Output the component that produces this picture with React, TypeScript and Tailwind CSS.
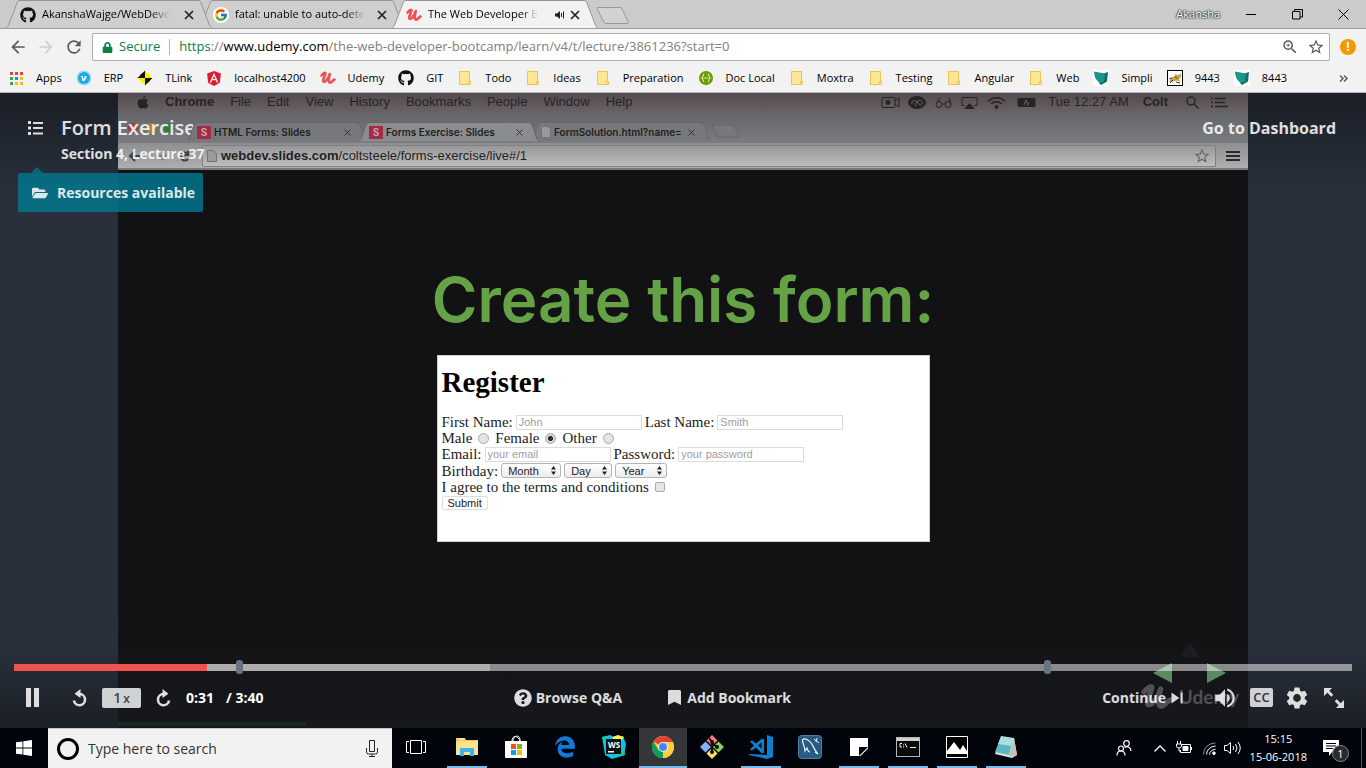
import React from "react";
import type { ReactNode } from "react";
import { FaGithub, FaAngular, FaFolderOpen, FaQuestionCircle, FaEdgeLegacy, FaLock, FaBookmark } from "react-icons/fa";
import { FcGoogle } from "react-icons/fc";
import {
  MdArrowBack,
  MdArrowForward,
  MdRefresh,
  MdOutlineZoomIn,
  MdStarBorder,
  MdSettings,
  MdVolumeUp,
  MdSkipNext,
} from "react-icons/md";

/* ---------- Logos ---------- */

function UdemyMark({ className }: { className?: string }) {
  return (
    <svg viewBox="0 0 16 14" className={className} fill="none" stroke="currentColor" strokeLinecap="round" strokeLinejoin="round">
      <path d="M1.500 4.500C3 2.800 4.800 1.200 5.400 2C6 3 3 7.500 3.200 9.800C3.500 12.500 7.500 10 9.800 3C8.500 8 8.300 11.600 10.200 11.600C12 11.600 12.500 9.500 14.500 8.500" strokeWidth="2.600" />
    </svg>
  );
}

function AppsGrid() {
  const fills = ["#ea4335", "#ea4335", "#ea4335", "#34a853", "#1a8cff", "#fbbc05", "#34a853", "#fbbc05", "#fbbc05"];
  return (
    <svg viewBox="0 0 13 13" className="size-[13px]" shapeRendering="crispEdges">
      {fills.map((f, i) => (
        <rect key={i} x={(i % 3) * 5} y={Math.floor(i / 3) * 5} width="3" height="3" fill={f} />
      ))}
    </svg>
  );
}

function FolderIcon() {
  return (
    <svg viewBox="0 0 12 14" className="h-[14px] w-3">
      <path d="M.5.500h10v10h1v3H.500z" fill="#ffe694" stroke="#eac54f" />
      <path d="M9.500 13.500v-3h2" fill="none" stroke="#eac54f" />
    </svg>
  );
}

function VBadge() {
  return (
    <svg viewBox="0 0 16 16" className="size-4">
      <circle cx="8" cy="8" r="7.500" fill="#9fdcf5" />
      <circle cx="8" cy="8" r="6" fill="#1cabe2" />
      <path d="M4.800 6.400c1.200-.9 1.700-1.200 2.100.2l.6 2.600c1-1 1.200-1.900.7-2.200.6-1.400 2.600-1.500 2.300.2-.3 1.600-2.200 4.100-3.200 4.100s-1.100-1.700-1.600-4z" fill="#fff" />
    </svg>
  );
}

function TargetIcon() {
  return (
    <svg viewBox="0 0 16 16" className="size-4">
      <path d="M8 .5v7.500H.5L2.800 5.800a6 6 0 0 1 3-3z" fill="#111" />
      <path d="M8 .5l2.200 2.300a6 6 0 0 1 3 3L15.500 8H8z" fill="#ffee00" />
      <path d="M15.500 8l-2.300 2.200a6 6 0 0 1-3 3L8 15.500V8z" fill="#111" />
      <path d="M8 15.500l-2.200-2.300a6 6 0 0 1-3-3L.5 8H8z" fill="#ffee00" />
    </svg>
  );
}

function GreenBraces() {
  return (
    <svg viewBox="0 0 16 16" className="size-[14px]">
      <circle cx="8" cy="8" r="8" fill="#6a9a06" />
      <path d="M6 3.500C4 3.500 5.200 7.500 3.500 8C5.200 8.500 4 12.500 6 12.500M10 3.500c2 0 .8 4 2.500 4.500c-1.700.5-.5 4.500-2.500 4.500M5.500 8h5" fill="none" stroke="#d9f0a8" strokeWidth="1.300" />
    </svg>
  );
}

function TealLeaf() {
  return (
    <svg viewBox="0 0 16 16" className="size-4">
      <rect width="16" height="16" fill="#fff" />
      <path d="M9 4L15 2L14 11.500L8 15L6 13z" fill="#0f6f66" />
      <path d="M1 1.500L12 3.500L11 11.500L6.500 13C3 10.500 1 6.500 1 1.500z" fill="#1a978a" />
    </svg>
  );
}

function TomcatIcon() {
  return (
    <svg viewBox="0 0 16 16" className="size-4">
      <rect x=".5" y=".5" width="15" height="15" fill="#fff" stroke="#000" />
      <path d="M2.500 11C4 7 6 7 8 6l.5-2.500 1.500 1.500h2L14 3v4l-2 2 1.500 3-3-1.500-4 .5-3 1.500z" fill="#c9a04c" />
      <path d="M3 13l3-3M9 12l4 1M2.500 8.500L5 8M8 6.500l2 2" stroke="#3b2a10" fill="none" />
    </svg>
  );
}

/* ---------- Browser frame ---------- */

function TabEdge({ side, active }: { side: "left" | "right"; active?: boolean }) {
  const fill = active ? "#f2f2f2" : "#cfcfcf";
  return (
    <svg viewBox="0 0 14 28" className="h-7 w-[14px] shrink-0" aria-hidden="true">
      {side === "left" ? (
        <>
          <path d="M0 28C2 27 2 26 3 24L11 3C11.500 1.500 12 .5 14 .5V28z" fill={fill} />
          <path d="M0 28C2 27 2 26 3 24L11 3C11.500 1.500 12 .5 14 .5" fill="none" stroke="#959595" />
        </>
      ) : (
        <>
          <path d="M14 28C12 27 12 26 11 24L3 3C2.500 1.500 2 .5 0 .5V28z" fill={fill} />
          <path d="M14 28C12 27 12 26 11 24L3 3C2.500 1.500 2 .5 0 .5" fill="none" stroke="#959595" />
        </>
      )}
    </svg>
  );
}

function CloseX() {
  return (
    <svg viewBox="0 0 10 10" className="size-[10px]" stroke="#222" strokeWidth="1.700" fill="none">
      <path d="M1 1l8 8M9 1L1 9" />
    </svg>
  );
}

function Tab({ icon, title, active, audible, layer }: { icon: ReactNode; title: string; active?: boolean; audible?: boolean; layer: string }) {
  return (
    <div className={`relative -mr-[13px] flex h-7 ${layer}`}>
      <TabEdge side="left" active={active} />
      <div className={`flex w-[178px] items-center justify-between border-t border-[#959595] pr-1 ${active ? "bg-[#f2f2f2]" : "bg-[#cfcfcf]"}`}>
        <button className="flex items-center gap-[6px] text-left">
          <span className="flex size-4 shrink-0 items-center justify-center">{icon}</span>
          <span className="whitespace-nowrap mask-r-from-85% mask-r-to-100%">{title}</span>
        </button>
        <span className="flex items-center gap-[5px]">
          {audible && (
            <svg viewBox="0 0 10 10" className="size-[10px] shrink-0" aria-label="Playing audio">
              <path d="M0 3.500h2L5 1v8L2 6.500H0z" fill="#222" />
              <path d="M6.500 3v4M8.500 1.500v7" stroke="#222" strokeWidth="1" fill="none" />
            </svg>
          )}
          <button aria-label="Close tab">
            <CloseX />
          </button>
        </span>
      </div>
      <TabEdge side="right" active={active} />
    </div>
  );
}

function TabStrip() {
  return (
    <div className="flex h-[29px] items-start justify-between border-b border-[#a0a0a0] bg-[#cbcbcb] text-[11px] text-black">
      <div className="flex pl-[6px]">
        <Tab layer="z-[2]" icon={<FaGithub className="size-4 text-[#111]" />} title="AkanshaWajge/WebDeve" />
        <Tab
          layer="z-[1]"
          icon={
            <span className="flex size-4 items-center justify-center rounded-full bg-white">
              <FcGoogle className="size-[14px]" />
            </span>
          }
          title="fatal: unable to auto-dete"
        />
        <Tab layer="z-[3]" active audible icon={<UdemyMark className="size-4 text-[#ec5252]" />} title="The Web Developer B" />
        <button aria-label="New tab" className="mt-[7px] ml-[10px] self-start">
          <svg viewBox="0 0 36 18" className="h-[18px] w-9">
            <path d="M2.500.500h22.500q1.500 0 2.200 1.500l6 13q.6 1.500-1 1.500H11q-1.600 0-2.300-1.500l-6.500-13Q1.500.5 3 .5z" fill="#d2d2d2" stroke="#989898" />
          </svg>
        </button>
      </div>
      <div className="flex h-7 items-center">
        <span className="mr-2 text-[11px] text-white [text-shadow:0_0_2px_#000,0_0_2px_#000]">Akansha</span>
        <button aria-label="Minimize" className="flex w-[46px] justify-center">
          <svg viewBox="0 0 11 11" className="size-[11px]" stroke="#000" fill="none">
            <path d="M0 5.500h10" />
          </svg>
        </button>
        <button aria-label="Restore" className="flex w-[46px] justify-center">
          <svg viewBox="0 0 11 11" className="size-[11px]" stroke="#000" fill="none">
            <path d="M.5 2.500h7.500v7.500H.5zM2.500 2.500V.5h8v7.500H8" />
          </svg>
        </button>
        <button aria-label="Close" className="flex w-[46px] justify-center">
          <svg viewBox="0 0 11 11" className="size-[11px]" stroke="#000" fill="none">
            <path d="M.5.5l10 10M10.500.5l-10 10" />
          </svg>
        </button>
      </div>
    </div>
  );
}

function Toolbar() {
  return (
    <div className="flex items-center bg-[#f2f2f2] pt-1 pb-[3px] text-[#5a5a5a]">
      <button aria-label="Back" className="ml-2">
        <MdArrowBack className="size-5" />
      </button>
      <button aria-label="Forward" className="ml-2 text-[#d0d0d0]">
        <MdArrowForward className="size-5" />
      </button>
      <button aria-label="Reload" className="mr-2 ml-2">
        <MdRefresh className="size-5" />
      </button>
      <div className="flex h-7 flex-1 items-center rounded-xs border border-[#adadad] bg-white px-1 pl-2 text-[13px]">
        <FaLock className="mx-px size-[11px] text-[#0b8043]" />
        <span className="ml-[5px] text-[#0b8043]">Secure</span>
        <span className="mx-[9px] h-4 w-px bg-[#b5b5b5]" />
        <div role="textbox" aria-label="Address" contentEditable suppressContentEditableWarning className="flex-1 whitespace-nowrap text-[#808080] outline-none">
          <span className="text-[#0b8043]">https</span>://<span className="text-black">www.udemy.com</span>
          /the-web-developer-bootcamp/learn/v4/t/lecture/3861236?start=0
        </div>
        <button aria-label="Zoom">
          <MdOutlineZoomIn className="size-[18px]" />
        </button>
        <button aria-label="Bookmark this page" className="ml-2">
          <MdStarBorder className="size-[18px]" />
        </button>
      </div>
      <button aria-label="Update" className="mr-[10px] ml-[10px] flex size-4 items-center justify-center rounded-full bg-[#f29900] text-[12px] font-bold text-white">
        !
      </button>
    </div>
  );
}

const bookmarks: { label: string; icon: ReactNode }[] = [
  { label: "Apps", icon: <AppsGrid /> },
  { label: "ERP", icon: <VBadge /> },
  { label: "TLink", icon: <TargetIcon /> },
  { label: "localhost4200", icon: <FaAngular className="size-[17px] text-[#dd1b2f]" /> },
  { label: "Udemy", icon: <UdemyMark className="size-4 text-[#ec5252]" /> },
  { label: "GIT", icon: <FaGithub className="size-4 text-[#111]" /> },
  { label: "Todo", icon: <FolderIcon /> },
  { label: "Ideas", icon: <FolderIcon /> },
  { label: "Preparation", icon: <FolderIcon /> },
  { label: "Doc Local", icon: <GreenBraces /> },
  { label: "Moxtra", icon: <FolderIcon /> },
  { label: "Testing", icon: <FolderIcon /> },
  { label: "Angular", icon: <FolderIcon /> },
  { label: "Web", icon: <FolderIcon /> },
  { label: "Simpli", icon: <TealLeaf /> },
  { label: "9443", icon: <TomcatIcon /> },
  { label: "8443", icon: <TealLeaf /> },
];

function BookmarksBar() {
  return (
    <nav aria-label="Bookmarks" className="flex h-[29px] items-center justify-between border-b border-[#b6b4b6] bg-[#f2f2f2] pr-[18px] pl-2 text-[11px] text-black">
      <div className="flex items-center gap-[14px]">
        {bookmarks.map((b) => (
          <a key={b.label} href="#" className="flex items-center gap-3 whitespace-nowrap">
            <span className="flex size-4 items-center justify-center">{b.icon}</span>
            {b.label}
          </a>
        ))}
      </div>
      <button aria-label="More bookmarks">
        <svg viewBox="0 0 9 7" className="h-[7px] w-[9px]" fill="none" stroke="#555" strokeWidth="1.400">
          <path d="M1 .5l3 3-3 3M5 .5l3 3-3 3" />
        </svg>
      </button>
    </nav>
  );
}

/* ---------- Recorded screen inside the video ---------- */

function VideoMenuBar() {
  return (
    <div className="flex h-[18px] items-center justify-between bg-linear-to-b from-[#514a4e] to-[#6a6063] pr-5 pl-[19px] font-['Liberation_Sans'] text-[13px] text-[#262325]">
      <div className="flex items-center gap-4">
        <svg viewBox="0 0 12 13" className="h-[13px] w-3" fill="currentColor">
          <path d="M8.300 0c.1 1.300-1.100 2.600-2.400 2.600C5.700 1.400 7 .1 8.300 0zM6 3.400c.6 0 1.400-.7 2.500-.7 1 0 1.900.5 2.400 1.300-2.100 1.300-1.700 4.100.5 5-.5 1.500-1.700 3.500-2.900 3.500-.9 0-1.200-.5-2.300-.5s-1.500.5-2.300.5C2.500 12.500.700 9.600.700 6.900c0-2.500 1.500-4 3.100-4C4.800 2.900 5.500 3.400 6 3.400z" />
        </svg>
        <span className="font-bold">Chrome</span>
        <span>File</span>
        <span>Edit</span>
        <span>View</span>
        <span>History</span>
        <span>Bookmarks</span>
        <span>People</span>
        <span>Window</span>
        <span>Help</span>
      </div>
      <div className="flex items-center">
        <svg viewBox="0 0 157 13" className="mr-[10px] h-[13px] w-[157px]" fill="none" stroke="currentColor">
          <rect x="1" y="1.500" width="13" height="10" rx="1" />
          <circle cx="7" cy="6.500" r="2" fill="currentColor" />
          <path d="M14 5l4-3v9l-4-3" />
          <ellipse cx="36" cy="6.500" rx="8.500" ry="6" fill="currentColor" />
          <path d="M31 8c-1-3 3-5 5-2s4 4 5 2-1-5-4-3-4 5-1 5" stroke="#6a6063" />
          <circle cx="58" cy="8.500" r="3" />
          <circle cx="67" cy="8.500" r="3" />
          <path d="M55 8l4-6M70 8l-2-6M61 8h3" />
          <path d="M84 9.500h-3v-8h15v8h-3" />
          <path d="M84 12.500l4.500-5 4.500 5z" fill="currentColor" />
          <path d="M107 5.500c5-5 13-5 17 0M110 8c3-3 8-3 11 0" strokeWidth="1.500" />
          <circle cx="115.500" cy="11" r="1.500" fill="currentColor" />
          <rect x="137" y="2.500" width="17" height="8" rx="1" fill="currentColor" />
          <path d="M155.500 5v3M143 9l2-5 1 3h2l-2 3" stroke="#6a6063" />
        </svg>
        <span>Tue 12:27 AM</span>
        <span className="ml-[14px] font-bold">Colt</span>
        <svg viewBox="0 0 13 13" className="ml-[18px] size-[13px]" fill="none" stroke="currentColor" strokeWidth="1.400">
          <circle cx="5" cy="5" r="4" />
          <path d="M8 8l4.500 4.500" />
        </svg>
        <svg viewBox="0 0 17 11" className="ml-3 h-[11px] w-[17px]" stroke="currentColor" strokeWidth="1.600">
          <path d="M0 1.500h2M4 1.500h11M0 5.500h2M4 5.500h10M0 9.500h2M4 9.500h13" />
        </svg>
      </div>
    </div>
  );
}

function SlidesBadge() {
  return <span className="flex h-[13px] w-[14px] items-center justify-center bg-[#a32a48] text-[10px] font-bold text-[#c9a3ad]">S</span>;
}

function PageIcon() {
  return (
    <svg viewBox="0 0 10 12" className="h-3 w-[10px] shrink-0">
      <path d="M.5.5h6l3 3v8h-9z" fill="#9a9a9c" stroke="#757577" />
    </svg>
  );
}

function VideoTab({ icon, title, front }: { icon: ReactNode; title: string; front?: boolean }) {
  return (
    <div className={`relative -mr-2 flex ${front ? "z-[2]" : "z-[1]"}`}>
      <svg viewBox="0 0 10 19" className="h-[19px] w-[10px]">
        <path d="M0 19C4 18 5 1 10 .5V19z" fill={front ? "#8b8c8e" : "#77787a"} />
        <path d="M0 19C4 18 5 1 10 .5" fill="none" stroke="#66676a" />
      </svg>
      <div className={`flex h-[19px] w-[160px] items-center gap-[3px] border-t border-[#66676a] ${front ? "bg-[#8b8c8e]" : "bg-[#77787a]"}`}>
        {icon}
        <span className="flex-1 whitespace-nowrap">{title}</span>
        <svg viewBox="0 0 7 7" className="mr-[6px] size-[7px]" stroke="#333" fill="none">
          <path d="M.5.500l6 6M6.500.5l-6 6" />
        </svg>
      </div>
      <svg viewBox="0 0 10 19" className="h-[19px] w-[10px]">
        <path d="M10 19C6 18 5 1 0 .5V19z" fill={front ? "#8b8c8e" : "#77787a"} />
        <path d="M10 19C6 18 5 1 0 .5" fill="none" stroke="#66676a" />
      </svg>
    </div>
  );
}

function VideoBrowser() {
  return (
    <div className="font-['Liberation_Sans'] text-[#1f1f21]">
      <div className="flex h-8 items-end bg-linear-to-b from-[#626366] to-[#7c7d80] pb-[2px] font-['Inter'] text-[10px] font-semibold">
        <div className="flex w-[69px] items-center gap-2 pb-2 pl-[10px]">
          <span className="size-[10px] rounded-full bg-[#a33a34]" />
          <span className="size-[10px] rounded-full bg-[#a8822c]" />
          <span className="size-[10px] rounded-full bg-[#2f7d35]" />
        </div>
        <VideoTab icon={<SlidesBadge />} title="HTML Forms: Slides" />
        <VideoTab front icon={<SlidesBadge />} title="Forms Exercise: Slides" />
        <VideoTab icon={<PageIcon />} title="FormSolution.html?name=" />
        <svg viewBox="0 0 30 14" className="mb-[3px] ml-2 h-[14px] w-[30px]">
          <path d="M1 1h20c4 0 5 12 8 12H8C4 13 3 1 1 1z" fill="#77787a" stroke="#67686a" />
        </svg>
      </div>
      <div className="flex h-[27px] items-center border-b-2 border-[#77787a] bg-linear-to-b from-[#8e8f91] to-[#aeaeb0] pr-2 pl-2 text-[13px]">
        <svg viewBox="0 0 68 12" className="h-3 w-[68px]" fill="none" stroke="#3f3f41" strokeWidth="2">
          <path d="M14 6H4M9 1L4 6l5 5" />
          <path d="M30 6h10M36 2l4 4-4 4" stroke="#7b7b7d" />
          <path d="M62 4a4 4 0 1 0 0 5M62 1v4h-4" />
        </svg>
        <div className="ml-2 flex h-[22px] flex-1 items-center rounded-xs border border-[#808082] bg-linear-to-b from-[#98989a] to-[#bdbdbf] pr-1 pl-1">
          <PageIcon />
          <span className="ml-1 flex-1">
            <span className="font-bold">webdev.slides.com</span>/coltsteele/forms-exercise/live#/1
          </span>
          <MdStarBorder className="size-[18px] text-[#66666a]" />
        </div>
        <svg viewBox="0 0 14 12" className="ml-[10px] h-3 w-[14px]" stroke="#2a2a2c" strokeWidth="2">
          <path d="M0 2h14M0 6h14M0 10h14" />
        </svg>
      </div>
    </div>
  );
}

function SlideInput({ id, label, placeholder, type = "text" }: { id: string; label: string; placeholder: string; type?: string }) {
  return (
    <span className="flex items-center gap-[3px]">
      <label htmlFor={id}>{label}</label>
      <input
        id={id}
        type={type}
        placeholder={placeholder}
        className="h-[15px] w-[126px] border border-[#dcdcdc] bg-white pl-[2px] font-['Liberation_Sans'] text-[11px] placeholder:text-[#a0a0a0]"
      />
    </span>
  );
}

function SlideRadio({ label, checked }: { label: string; checked?: boolean }) {
  return (
    <label className="flex items-center gap-[6px]">
      {label}
      <input
        type="radio"
        name="gender"
        defaultChecked={checked}
        className="size-[11px] appearance-none rounded-full border border-[#a8a8a8] bg-[#e4e4e4] checked:bg-[radial-gradient(circle,#333_35%,#d8d8d8_45%)]"
      />
    </label>
  );
}

function SlideSelect({ label, width }: { label: string; width: string }) {
  return (
    <span className={`relative flex ${width}`}>
      <select
        aria-label={label}
        className="h-[15px] w-full appearance-none rounded-[3px] border border-[#b4b4b4] bg-linear-to-b from-white to-[#ececec] pl-[6px] font-['Liberation_Sans'] text-[11px] leading-3 text-[#222]"
      >
        <option>{label}</option>
      </select>
      <svg viewBox="0 0 5 9" className="pointer-events-none absolute top-[3px] right-[5px] h-[9px] w-[5px]" fill="#222">
        <path d="M2.500 0L5 3.500H0zM2.500 9L5 5.500H0z" />
      </svg>
    </span>
  );
}

function Slide() {
  return (
    <div className="flex flex-1 flex-col items-center bg-linear-to-b from-[#121214] from-80% to-[#17181c] pt-[95px]">
      <h2 className="font-['Inter'] text-[62px] leading-[70px] font-semibold whitespace-nowrap text-[#64a245]">Create this form:</h2>
      <form className="mt-5 flex h-[187px] w-[493px] flex-col border border-[#cfcfcf] bg-white pl-1 font-['Liberation_Serif'] text-[15px] leading-4 text-[#1c1c1c]">
        <h3 className="mt-3 mb-[18px] text-[29px] leading-7 font-bold text-black">Register</h3>
        <div className="flex h-4 items-center gap-[3px]">
          <SlideInput id="first" label="First Name:" placeholder="John" />
          <SlideInput id="last" label="Last Name:" placeholder="Smith" />
        </div>
        <div className="flex h-4 items-center gap-[6px]">
          <SlideRadio label="Male" />
          <SlideRadio label="Female" checked />
          <SlideRadio label="Other" />
        </div>
        <div className="flex h-4 items-center gap-[3px]">
          <SlideInput id="email" label="Email:" placeholder="your email" type="email" />
          <SlideInput id="password" label="Password:" placeholder="your password" type="password" />
        </div>
        <div className="flex h-[17px] items-center gap-[3px]">
          <span>Birthday:</span>
          <SlideSelect label="Month" width="w-[60px]" />
          <SlideSelect label="Day" width="w-[48px]" />
          <SlideSelect label="Year" width="w-[52px]" />
        </div>
        <label className="flex h-4 items-center gap-[6px]">
          I agree to the terms and conditions
          <input type="checkbox" className="size-[10px] appearance-none rounded-xs border border-[#aaa] bg-[#e6e6e6]" />
        </label>
        <button type="button" className="mt-px h-[14px] self-start rounded-xs border border-[#dedede] bg-white px-[5px] font-['Liberation_Sans'] text-[11px] leading-3">
          Submit
        </button>
      </form>
    </div>
  );
}

function Video() {
  return (
    <div className="relative flex aspect-[1130/635] flex-col overflow-hidden">
      <VideoMenuBar />
      <VideoBrowser />
      <Slide />
      <div className="absolute bottom-[2px] left-0 h-1 w-[188px] bg-[#1e2624]" />
      <svg viewBox="0 0 76 42" className="absolute right-5 bottom-[44px] h-[42px] w-[76px]">
        <path d="M38 0l10 15H28z" fill="#1c1d20" />
        <path d="M20 21v20L1 31z" fill="#5b8a62" />
        <path d="M55 21v20l19-10z" fill="#5b8a62" />
      </svg>
      <div className="absolute right-[9px] bottom-[13px] flex items-center gap-[6px] text-[#505055]">
        <UdemyMark className="h-9 w-8" />
        <span className="font-['Lato'] text-[19px] font-bold">Udemy</span>
      </div>
    </div>
  );
}

/* ---------- Player chrome ---------- */

function ReplayIcon({ className }: { className?: string }) {
  return (
    <svg viewBox="0 0 18 18" className={className}>
      <path d="M8.500 5a5.600 5.600 0 1 1-5.600 6.500" fill="none" stroke="currentColor" strokeWidth="2.600" />
      <path d="M9.500 0v9L3.500 4.700z" fill="currentColor" />
    </svg>
  );
}

function PlayerHeader() {
  return (
    <div className="absolute inset-x-0 top-0 text-white/85">
      <div className="flex items-start justify-between pt-[22px] pr-[30px] pl-7">
        <div className="flex gap-[18px]">
          <button aria-label="Lecture list" className="mt-[6px] self-start">
            <svg viewBox="0 0 15 14" className="h-[14px] w-[15px]" fill="currentColor">
              <path d="M0 0h3v3H0zM5 1h10v2H5zM0 5.500h3v3H0zM5 6h10v2H5zM0 11h3v3H0zM5 11.500h10v2H5z" />
            </svg>
          </button>
          <div>
            <h1 className="text-[20px] leading-[26px] font-semibold">Form Exercise</h1>
            <p className="text-[14px] leading-[26px] font-bold">Section 4, Lecture 37</p>
          </div>
        </div>
        <a href="#" className="text-[16px] leading-[26px] font-bold">
          Go to Dashboard
        </a>
      </div>
      <div className="flex flex-col items-start pl-[18px]">
        <svg viewBox="0 0 12 6" className="ml-[13px] h-[6px] w-3 text-[#0a6477]" fill="currentColor">
          <path d="M6 0l6 6H0z" />
        </svg>
        <button className="flex h-[39px] items-center gap-[9px] rounded-xs bg-[#02768c]/85 pr-2 pl-[14px] text-[14px] font-bold">
          <FaFolderOpen className="size-4" />
          Resources available
        </button>
      </div>
    </div>
  );
}

function ProgressBar() {
  return (
    <div className="relative mr-[14px] ml-[14px] flex">
      <input
        type="range"
        aria-label="Playback position"
        min={0}
        max={220}
        defaultValue={31}
        className="h-[7px] w-full appearance-none bg-[linear-gradient(to_right,#ef5350_14.4%,rgba(255,255,255,0.65)_14.4%,rgba(255,255,255,0.65)_35.6%,rgba(255,255,255,0.5)_35.6%)] [&::-webkit-slider-thumb]:size-0 [&::-webkit-slider-thumb]:appearance-none"
      />
      <span className="absolute -top-1 left-[16.6%] h-[14px] w-[7px] rounded-[3px] bg-[#687382]" />
      <span className="absolute -top-1 left-[77%] h-[14px] w-[7px] rounded-[3px] bg-[#687382]" />
    </div>
  );
}

function PlayerControls() {
  return (
    <div className="absolute inset-x-0 bottom-0 text-[14px] font-bold text-white/85">
      <ProgressBar />
      <div className="grid h-[57px] grid-cols-[37%_1fr_auto] items-center pr-[22px] pb-1 pl-[26px]">
        <div className="flex items-center">
          <button aria-label="Pause">
            <svg viewBox="0 0 13 19" className="h-[19px] w-[13px]" fill="currentColor">
              <path d="M0 0h5v19H0zM8 0h5v19H8z" />
            </svg>
          </button>
          <button aria-label="Rewind 15 seconds" className="ml-8">
            <ReplayIcon className="size-[18px]" />
          </button>
          <button className="ml-[13px] h-5 w-[39px] rounded-xs bg-[#d0d2d6] text-[14px] leading-5 font-semibold text-[#3c434e]">
            1<span className="ml-[2px] text-[12px]">x</span>
          </button>
          <button aria-label="Forward 15 seconds" className="ml-[13px]">
            <ReplayIcon className="size-[18px] -scale-x-100" />
          </button>
          <span className="ml-[14px] text-white">0:31</span>
          <span className="ml-3 text-white">/ 3:40</span>
        </div>
        <div className="flex items-center gap-[46px]">
          <button className="flex items-center gap-1">
            <FaQuestionCircle className="size-[18px]" />
            Browse Q&amp;A
          </button>
          <button className="flex items-center gap-[6px]">
            <FaBookmark className="h-[15px] w-[13px]" preserveAspectRatio="none" />
            Add Bookmark
          </button>
        </div>
        <div className="flex items-center">
          <button className="flex items-center">
            Continue
            <MdSkipNext className="size-[22px]" />
          </button>
          <button aria-label="Volume" className="ml-6">
            <MdVolumeUp className="size-[26px]" />
          </button>
          <button aria-label="Captions" className="ml-3 flex h-[19px] w-[23px] items-center justify-center rounded-xs bg-[#d0d2d6] text-[13px] leading-none font-semibold text-[#2c323c]">
            CC
          </button>
          <button aria-label="Settings" className="ml-[11px]">
            <MdSettings className="size-[26px]" />
          </button>
          <button aria-label="Fullscreen" className="ml-[14px]">
            <svg viewBox="0 0 20 20" className="size-5" fill="currentColor">
              <path d="M0 0h8L5.300 2.700l4 4-2 2-4-4L0 8zM20 20h-8l2.700-2.700-4-4 2-2 4 4L20 12z" />
            </svg>
          </button>
        </div>
      </div>
    </div>
  );
}

function Player() {
  return (
    <main className="relative flex min-h-0 flex-1 justify-center overflow-hidden bg-[linear-gradient(to_bottom,#1a1e27_0,#29303b_100px,#29303b_calc(100%-80px),#1b1f26_100%)]">
      <Video />
      <PlayerHeader />
      <PlayerControls />
    </main>
  );
}

/* ---------- Taskbar ---------- */

function TaskView() {
  return (
    <svg viewBox="0 0 20 16" className="h-4 w-5" fill="none" stroke="#fff">
      <path d="M4.500 1.500h11v13h-11zM3 2.500H.5v11H3M17 2.500h2.500v11H17" />
    </svg>
  );
}

function ExplorerIcon() {
  return (
    <svg viewBox="0 0 22 20" className="h-5 w-[22px]">
      <path d="M0 1h9l1 2h12v15H0z" fill="#f5c84c" />
      <path d="M1 4h21v14H0V5z" fill="#fde292" />
      <path d="M2 1.500h6v1H2z" fill="#fff" />
      <path d="M4 19v-7q0-1 1-1h12q1 0 1 1v7h-4v-4H8v4z" fill="#3cb4e7" />
    </svg>
  );
}

function StoreIcon() {
  return (
    <svg viewBox="0 0 24 24" className="size-6">
      <path d="M8 6C8 0 14 0 16 6M9 6c1-7 8-6 7 0" fill="none" stroke="#fff" />
      <path d="M1 6h22v16q0 1-1 1H2q-1 0-1-1z" fill="#fff" />
      <path d="M7 9h5v5H7z" fill="#f25022" />
      <path d="M13 9h5v5h-5z" fill="#7fba00" />
      <path d="M7 15h5v5H7z" fill="#00a4ef" />
      <path d="M13 15h5v5h-5z" fill="#ffb900" />
    </svg>
  );
}

function WebStormIcon() {
  return (
    <span className="relative flex size-6 items-center justify-center">
      <svg viewBox="0 0 24 24" className="absolute inset-0 size-6">
        <path d="M0 2l8-2 7 4 6-3 3 8-2 11-12 4-7-4z" fill="#07c3f2" />
        <path d="M10 2l6-2 6 2-6 8z" fill="#fcf84a" />
        <path d="M0 2l5-1 3 10-3 6zM14 16l8-4 1 8-10 3z" fill="#14c9b4" />
        <path d="M4 4h15v15H4z" fill="#111" />
        <path d="M6 16h6v1.500H6z" fill="#fff" />
      </svg>
      <span className="relative pb-1 text-[8px] leading-none font-bold text-white">WS</span>
    </span>
  );
}

function ChromeIcon() {
  return (
    <svg viewBox="0 0 24 24" className="size-[22px]">
      <circle cx="12" cy="12" r="12" fill="#ffcd40" />
      <path d="M12 12L1.600 6A12 12 0 0 1 22.400 6z" fill="#db4437" />
      <path d="M12 12v12A12 12 0 0 1 1.600 6L7 15z" fill="#0f9d58" />
      <path d="M12 6.500h10.600A12 12 0 0 1 11.500 24L17 15z" fill="#ffcd40" />
      <circle cx="12" cy="12" r="5.500" fill="#f1f1f1" />
      <circle cx="12" cy="12" r="4.400" fill="#4285f4" />
    </svg>
  );
}

function GitIcon() {
  return (
    <svg viewBox="0 0 24 24" className="size-6">
      <path d="M12 0l5.500 5.500-5.500 5.500-5.500-5.500z" fill="#f97b83" />
      <path d="M18.500 6.500l5.500 5.500-5.500 5.500-5.500-5.500z" fill="#8fd05c" />
      <path d="M12 13l5.500 5.500-5.500 5.500-5.500-5.500z" fill="#ffe066" />
      <path d="M5.500 6.500l5.500 5.500-5.500 5.500L0 12z" fill="#80b3ff" />
      <path d="M9 3l3 4v10M12 8l5 4" stroke="#111" strokeWidth="2" fill="none" />
      <circle cx="12" cy="7" r="2" fill="#111" />
      <circle cx="17" cy="12" r="2" fill="#111" />
      <circle cx="12" cy="17" r="2" fill="#111" />
    </svg>
  );
}

function VsCodeIcon() {
  return (
    <svg viewBox="0 0 24 24" className="size-6" fill="#0f7fd1">
      <path d="M18 0l6 2v20l-6 2L0 20v-1l18 1z" />
      <path d="M1 6.500l2-1 4 3 6-5 2 1v13l-2 1-6-6-4 3-2-1 4-4zM12.500 7.500l-3.500 3 3.500 3z" fillRule="evenodd" />
    </svg>
  );
}

function WorkbenchIcon() {
  return (
    <svg viewBox="0 0 24 24" className="size-6">
      <rect x=".5" y=".5" width="23" height="23" rx="3" fill="#285a82" stroke="#4e7ea3" />
      <path d="M5 4c4-1 8 3 10 7 1 3 3 5 5 8l-3-2M5 4c-2 3 2 6 2 12l2-3c1 3 1 4 3 4" fill="none" stroke="#e8f0f6" strokeWidth="1.200" />
      <path d="M16 4l5 4M19 3l-1 4" stroke="#e8f0f6" />
    </svg>
  );
}

function StickyIcon() {
  return (
    <svg viewBox="0 0 18 18" className="size-[18px]">
      <path d="M0 0h18v9h-9v9H0z" fill="#fff" />
      <path d="M18 9v1.500L10.500 18H9z" fill="#fff" />
    </svg>
  );
}

function CmdIcon() {
  return (
    <svg viewBox="0 0 24 20" className="h-5 w-6">
      <rect x=".5" y=".5" width="23" height="19" fill="#0a0a0a" stroke="#b5b5b5" />
      <path d="M1 1h22v3H1z" fill="#cfcfcf" />
      <path d="M6 6.500H4v3.500h2M7.500 7.500v1M7.500 9.500v1M9 6.500l2 4M14 10.500h6" stroke="#eee" fill="none" />
    </svg>
  );
}

function PhotosIcon() {
  return (
    <svg viewBox="0 0 22 22" className="size-[22px]">
      <path d="M.5.500h21v21H.500z" stroke="#fff" fill="#000" />
      <path d="M1 18v-3l7-9 6 8 3-5 4 6v3z" fill="#fff" />
    </svg>
  );
}

function NotepadIcon() {
  return (
    <svg viewBox="0 0 24 24" className="size-6">
      <path d="M7 1l13 2 3 17-5 3-17-4z" fill="#d9e4e6" />
      <path d="M7 2l12 2-4 16L1 17z" fill="#5db6c4" />
      <path d="M7 2l12 2-2 7L4 9z" fill="#a8dde4" />
      <path d="M20 3l3 17-5 2-3-2z" fill="#c7c3b4" />
    </svg>
  );
}

const tasks: { label: string; icon: ReactNode; open?: boolean; current?: boolean }[] = [
  { label: "Task View", icon: <TaskView /> },
  { label: "File Explorer", icon: <ExplorerIcon />, open: true },
  { label: "Microsoft Store", icon: <StoreIcon /> },
  { label: "Microsoft Edge", icon: <FaEdgeLegacy className="size-[22px] text-[#0f7ad8]" /> },
  { label: "WebStorm", icon: <WebStormIcon /> },
  { label: "Google Chrome", icon: <ChromeIcon />, open: true, current: true },
  { label: "Git", icon: <GitIcon /> },
  { label: "Visual Studio Code", icon: <VsCodeIcon />, open: true },
  { label: "MySQL Workbench", icon: <WorkbenchIcon /> },
  { label: "Sticky Notes", icon: <StickyIcon />, open: true },
  { label: "Command Prompt", icon: <CmdIcon />, open: true },
  { label: "Photos", icon: <PhotosIcon />, open: true },
  { label: "Notepad", icon: <NotepadIcon />, open: true },
];

function Taskbar() {
  return (
    <footer className="flex h-10 shrink-0 items-stretch bg-[#01040a] text-white">
      <button aria-label="Start" className="flex w-12 items-center justify-center">
        <svg viewBox="0 0 16 16" className="size-4" fill="#fff">
          <path d="M0 2.300l6.500-.9v6.100H0zM7.300 1.300L16 0v7.500H7.300zM0 8.400h6.500v6.200L0 13.700zM7.300 8.400H16V16l-8.700-1.200z" />
        </svg>
      </button>
      <label className="flex w-[344px] items-center border-t border-[#c8c8c8] bg-[#f2f2f2] pr-[14px] pl-[9px]">
        <span className="size-[22px] rounded-full border-3 border-black" />
        <input
          type="text"
          aria-label="Search"
          placeholder="Type here to search"
          className="ml-[9px] min-w-0 flex-1 bg-transparent text-[14px] outline-none placeholder:text-[#333]"
        />
        <svg viewBox="0 0 12 17" className="h-[17px] w-3" fill="none" stroke="#222">
          <path d="M3.500.5h5v11h-5zM.5 8v4q0 2 2 2h7q2 0 2-2V8M6 14v2.500M3 16.500h6" />
        </svg>
      </label>
      <div className="flex gap-px">
        {tasks.map((t) => (
          <button key={t.label} aria-label={t.label} className={`flex w-12 flex-col items-center first:mr-[2px] ${t.current ? "bg-[#34363a]" : ""}`}>
            <span className="flex flex-1 items-center">{t.icon}</span>
            <span className={`h-[2px] ${t.current ? "w-12" : "w-10"} ${t.open ? "bg-[#76b9ed]" : ""}`} />
          </button>
        ))}
      </div>
      <div className="ml-auto flex items-center">
        <button aria-label="People">
          <svg viewBox="0 0 16 16" className="size-4" fill="none" stroke="#fff" strokeWidth="1.200">
            <circle cx="10.500" cy="3.500" r="2.800" />
            <path d="M8.500 7.500c3-2 6.500 0 6.500 3.500M1 15.500c0-6 8-6 8 0" />
            <circle cx="5" cy="8.500" r="2.500" />
          </svg>
        </button>
        <button aria-label="Show hidden icons" className="ml-[22px]">
          <svg viewBox="0 0 12 7" className="h-[7px] w-3" fill="none" stroke="#fff" strokeWidth="1.300">
            <path d="M.5 6.500l5.500-5.500 5.500 5.500" />
          </svg>
        </button>
        <svg viewBox="0 0 16 14" className="ml-[10px] h-[14px] w-4" fill="none" stroke="#fff" role="img" aria-label="Battery charging">
          <path d="M5 3.500h9.500v8H4.500V9M15.500 6v3M1.500 0v3M4.500 0v3M.5 3h5v2q0 2-2.500 2T.5 5zM3 7v3h2" />
          <path d="M7 5.500h5v4H7z" fill="#fff" />
        </svg>
        <svg viewBox="0 0 13 13" className="ml-[11px] size-[13px]" fill="none" stroke="#fff" role="img" aria-label="Network">
          <path d="M.5 12.500Q1 2 12.500 .8" stroke="#8d9096" />
          <path d="M3.500 12.500Q4 5 12.500 4M6.500 12.500Q7 8 12.500 7.200" />
          <circle cx="11" cy="11.200" r="1.300" fill="#fff" />
        </svg>
        <svg viewBox="0 0 17 14" className="ml-2 h-[14px] w-[17px]" fill="none" stroke="#fff" role="img" aria-label="Volume">
          <path d="M.5 4.500h2.500l3.500-3v11L3 9.500H.5zM9 5q1.500 2 0 4M11.500 3q3 4 0 8M14 1q4.500 6 0 12" />
        </svg>
        <div className="ml-[9px] text-center text-[11px] leading-[18px]">
          <div>15:15</div>
          <div>15-06-2018</div>
        </div>
        <button aria-label="Notifications" className="relative mr-[11px] ml-[16px] h-[27px] w-[27px]">
          <svg viewBox="0 0 16 16" className="size-4" fill="#fff">
            <path d="M0 0h16v12H9l-3 4v-4H0z" />
            <path d="M3 3.500h10M3 6h10M3 8.500h7" stroke="#000" />
          </svg>
          <span className="absolute right-px bottom-0 flex size-[17px] items-center justify-center rounded-full border border-[#888] bg-[#2a2a2a] text-[11px] leading-none">1</span>
        </button>
        <span className="mr-1 h-10 w-px bg-[#55575b]" />
      </div>
    </footer>
  );
}

export default function App() {
  return (
    <div className="flex h-screen flex-col overflow-hidden font-['Open_Sans','Noto_Sans',sans-serif]">
      <header className="shrink-0">
        <TabStrip />
        <Toolbar />
        <BookmarksBar />
      </header>
      <Player />
      <Taskbar />
    </div>
  );
}
